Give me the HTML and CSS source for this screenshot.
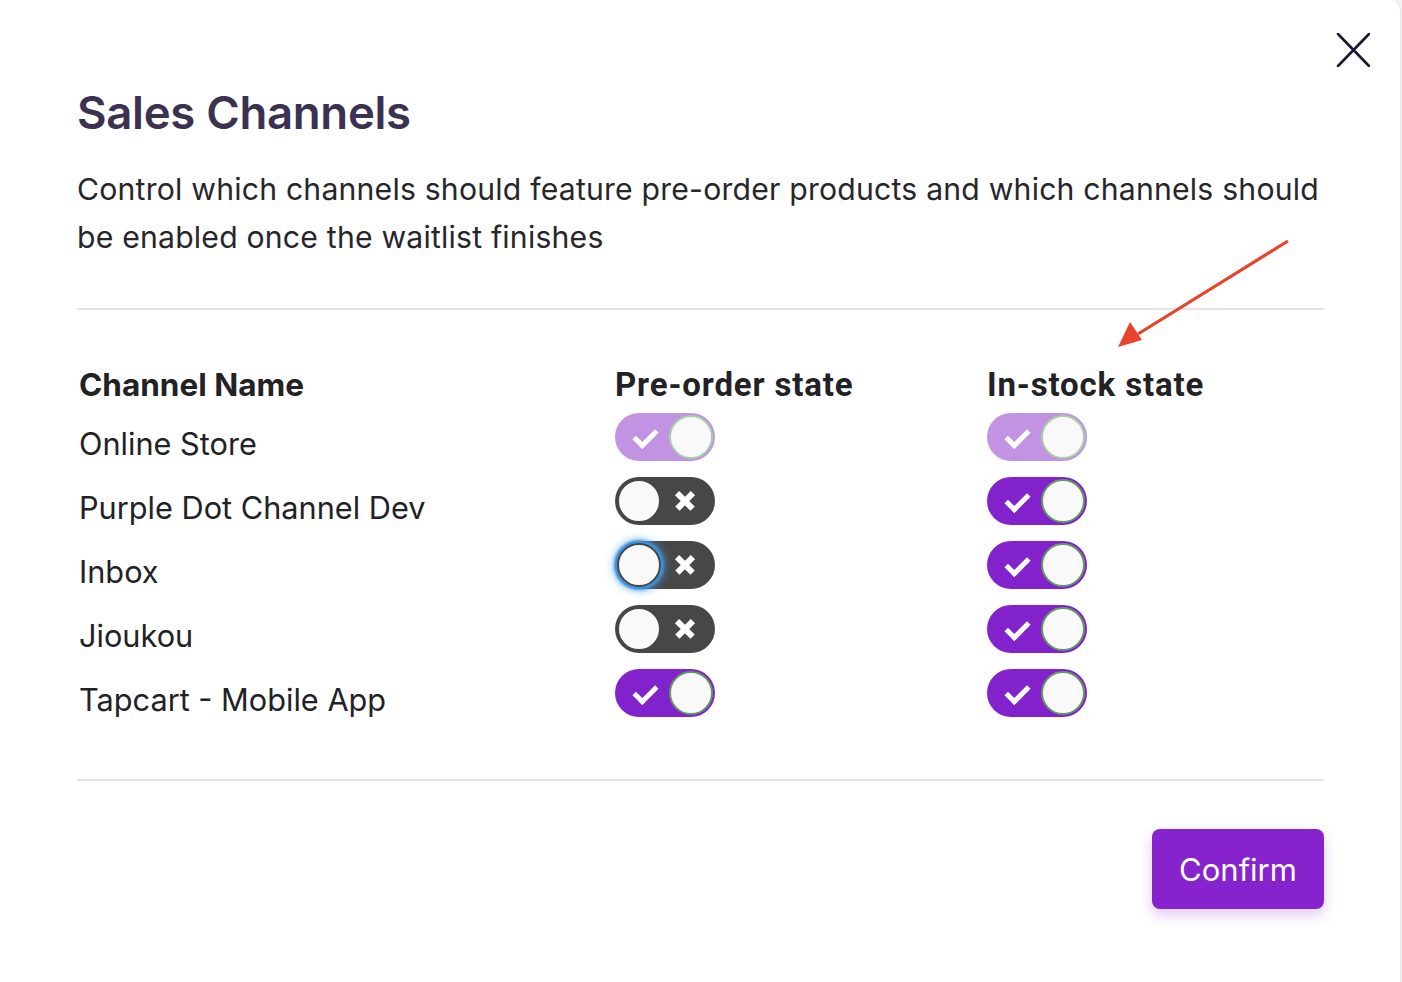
FILE: index.html
```html
<!DOCTYPE html>
<html lang="en">
<head>
    <meta charset="UTF-8">
    <meta name="viewport" content="width=device-width, initial-scale=1.0">
    <title>Sales Channels</title>
    <link rel="stylesheet" href="styles.css">
</head>
<body>
    <section class="modal">
        <button class="close" aria-label="Close">
            <svg width="34" height="34" viewBox="0 0 34 34"><path d="M2 1 L33 33 M33 1 L2 33" stroke="#1d1530" stroke-width="2.6" stroke-linecap="round"/></svg>
        </button>

        <h1 class="title">Sales Channels</h1>
        <p class="desc">Control which channels should feature pre-order products and which channels should be enabled once the waitlist finishes</p>

        <hr class="line">

        <div class="table">
            <div class="th">Channel Name</div>
            <div class="th th-state">Pre-order state</div>
            <div class="th th-state">In-stock state</div>

            <div class="td">Online Store</div>
            <div class="td td-switch"><span class="toggle on disabled"><span class="icon check"></span><span class="knob"></span></span></div>
            <div class="td td-switch"><span class="toggle on disabled"><span class="icon check"></span><span class="knob"></span></span></div>

            <div class="td">Purple Dot Channel Dev</div>
            <div class="td td-switch"><span class="toggle off"><span class="knob"></span><span class="icon cross"></span></span></div>
            <div class="td td-switch"><span class="toggle on"><span class="icon check"></span><span class="knob"></span></span></div>

            <div class="td">Inbox</div>
            <div class="td td-switch"><span class="toggle off focus"><span class="knob"></span><span class="icon cross"></span></span></div>
            <div class="td td-switch"><span class="toggle on"><span class="icon check"></span><span class="knob"></span></span></div>

            <div class="td">Jioukou</div>
            <div class="td td-switch"><span class="toggle off"><span class="knob"></span><span class="icon cross"></span></span></div>
            <div class="td td-switch"><span class="toggle on"><span class="icon check"></span><span class="knob"></span></span></div>

            <div class="td">Tapcart - Mobile App</div>
            <div class="td td-switch"><span class="toggle on"><span class="icon check"></span><span class="knob"></span></span></div>
            <div class="td td-switch"><span class="toggle on"><span class="icon check"></span><span class="knob"></span></span></div>
        </div>

        <hr class="line line-bottom">

        <div class="footer">
            <button class="confirm">Confirm</button>
        </div>

        <svg class="arrow" width="200" height="130" viewBox="0 0 200 130">
            <line x1="188" y1="11" x2="38" y2="104" stroke="#e8432b" stroke-width="3.2"/>
            <polygon points="18,117 30,92 42,110" fill="#e8432b"/>
        </svg>
    </section>
</body>
</html>
```

FILE: styles.css
```css
body{
 margin: 0;
 background-color: #f3f3f3;
 font-family: Inter, "Noto Sans", sans-serif;
 color: #222226;
 overflow: hidden;
}
.modal{
 position: relative;
 box-sizing: border-box;
 width: 1401px;
 height: 982px;
 background-color: #fff;
 border-right: 1px solid #e4e4e4;
 border-top-right-radius: 10px;
 padding: 86px 76px 0 77px;
}
.close{
 position: absolute;
 top: 33px;
 right: 30px;
 padding: 0;
 border: none;
 background: none;
 width: 34px;
 height: 34px;
}
.title{
 margin: 0;
 font-size: 45.5px;
 line-height: 54px;
 font-weight: 600;
 color: #3b3150;
 letter-spacing: -0.3px;
}
.desc{
 margin: 25px 0 0 0;
 font-size: 30.2px;
 line-height: 48px;
 color: #26262b;
 letter-spacing: 0.2px;
}
.line{
 margin: 47px 0 0 0;
 border: none;
 height: 2px;
 background-color: #e4e4e4;
}
.line-bottom{
 margin-top: 37px;
}
.table{
 display: grid;
 grid-template-columns: 538px 372px 1fr;
 grid-auto-rows: 64px;
 margin-top: 48px;
}
.th{
 height: 52px;
 align-self: start;
 display: flex;
 align-items: center;
 padding-left: 2px;
 font-size: 31.5px;
 font-weight: 700;
 color: #222226;
}
.th-state{
 font-family: Roboto, sans-serif;
 font-size: 33px;
 padding-left: 0;
 letter-spacing: 0.85px;
}
.table .th ~ .td{
 margin-top: -22px;
}
.td{
 display: flex;
 align-items: center;
 padding-left: 2px;
 font-size: 30.7px;
 color: #222226;
}
.td-switch{
 padding-left: 0;
}
.toggle{
 position: relative;
 display: flex;
 align-items: center;
 justify-content: space-between;
 box-sizing: border-box;
 width: 100px;
 height: 48px;
 margin-bottom: 13px;
 border-radius: 24px;
 padding: 0 2px;
}
.toggle.on{
 background-color: #8222cc;
 padding-left: 16px;
}
.toggle.on.disabled{
 background-color: #c292e3;
}
.toggle.off{
 background-color: #474747;
 padding-right: 19px;
}
.knob{
 box-sizing: border-box;
 width: 44px;
 height: 44px;
 border-radius: 50%;
 background-color: #f9f9f9;
}
.on .knob{
 border: 2px solid #5f9c5c;
}
.on.disabled .knob{
 border-color: #a6d1a2;
}
.off .knob{
 border: 2px solid #474747;
}
.focus .knob{
 box-shadow: 0 0 3px 3px #3b95e3, 0 0 8px 4px rgba(80, 160, 230, 0.6);
}
.icon{
 position: relative;
 width: 26px;
 height: 24px;
}
.check::before{
 content: "";
 position: absolute;
 left: 3px;
 top: 1px;
 width: 18px;
 height: 9px;
 border-left: 5.5px solid #fff;
 border-bottom: 5.5px solid #fff;
 transform: translate(0, 3px) rotate(-45deg);
}
.cross{
 width: 22px;
 height: 22px;
}
.cross::before, .cross::after{
 content: "";
 position: absolute;
 left: 0;
 top: 8px;
 width: 22px;
 height: 5.5px;
 background-color: #fff;
 transform: rotate(45deg);
}
.cross::after{
 transform: rotate(-45deg);
}
.footer{
 display: flex;
 justify-content: flex-end;
 margin-top: 48px;
}
.confirm{
 width: 172px;
 height: 80px;
 border: none;
 border-radius: 8px;
 background-color: #8623cc;
 color: #fff;
 font-family: Inter, sans-serif;
 font-size: 31px;
 box-shadow: 0 6px 14px rgba(134, 35, 204, 0.25);
}
.arrow{
 position: absolute;
 left: 1100px;
 top: 230px;
}
```
